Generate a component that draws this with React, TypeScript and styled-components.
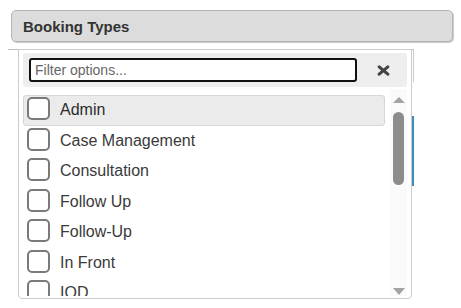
import React from 'react'
import styled, { createGlobalStyle } from 'styled-components'

const GlobalStyle = createGlobalStyle`
  html, body {
    margin: 0;
    padding: 0;
    background: #fff;
  }
  body {
    font-family: "Liberation Sans", Arial, sans-serif;
    color: #333;
  }
  * {
    box-sizing: border-box;
  }
`

const Page = styled.div`
  width: 461px;
  height: 308px;
  padding: 10px 8px 0 8px;
  overflow: hidden;
`

const SectionHeader = styled.div`
  margin-left: 3px;
  height: 32px;
  display: flex;
  align-items: center;
  padding: 1px 11px 0;
  background: #dcdcdc;
  border: 1px solid #b5b5b5;
  border-radius: 5px;
  box-shadow: 1px 1px 1px rgba(0, 0, 0, 0.22);
  font-size: 15px;
  font-weight: bold;
  color: #333;
`

const Content = styled.div`
  position: relative;
  margin-top: 7px;
  height: 260px;
`

const FormBehind = styled.div`
  width: 406px;
  display: flex;
  flex-direction: column;
  gap: 34px;
`

const FieldEdge = styled.div<{ $blue?: boolean; $h: number }>`
  height: ${({ $h }) => $h}px;
  border-top: ${({ $blue }) => ($blue ? 'none' : '1px solid #bbb')};
  border-right: ${({ $blue }) => ($blue ? '2px solid #3c8dbc' : '1px solid #ccc')};
`

const Dropdown = styled.div`
  position: absolute;
  left: 10px;
  top: 0;
  width: 394px;
  height: 250px;
  background: #fff;
  border: 1px solid #ccc;
  border-radius: 0 0 4px 4px;
  padding: 3px 4px 2px;
  display: flex;
  flex-direction: column;
  gap: 2px;
`

const FilterBar = styled.div`
  height: 34px;
  display: flex;
  align-items: center;
  padding: 0 0 0 6px;
  background: #eee;
  border-radius: 3px;
`

const FilterInput = styled.input`
  width: 328px;
  height: 24px;
  border: 2px solid #111;
  border-radius: 3px;
  padding: 0 4px;
  font-family: "Liberation Sans", Arial, sans-serif;
  font-size: 14px;
  color: #333;
  outline: none;

  &::placeholder {
    color: #666;
  }
`

const CloseButton = styled.button`
  flex: 1;
  display: flex;
  align-items: center;
  justify-content: center;
  padding: 0 0 0 3px;
  height: 100%;
  background: none;
  border: none;
  cursor: pointer;
`

const ListArea = styled.div`
  flex: 1;
  display: flex;
  gap: 5px;
  min-height: 0;
`

const Options = styled.div`
  width: 362px;
  padding-top: 6px;
  overflow: hidden;
`

const OptionRow = styled.div<{ $active?: boolean }>`
  height: 30.5px;
  display: flex;
  align-items: center;
  gap: 10px;
  padding: 0 3px;
  border: 1px solid ${({ $active }) => ($active ? '#d6d6d6' : 'transparent')};
  border-radius: 3px;
  background: ${({ $active }) => ($active ? '#ebebeb' : 'transparent')};
  font-size: 16px;
  color: ${({ $active }) => ($active ? '#2b2b2b' : '#3a3a3a')};
`

const Check = styled.span`
  width: 23px;
  height: 23px;
  flex: none;
  margin-bottom: 3px;
  border: 2px solid #7a7a7a;
  border-radius: 5px;
  background: #fff;
`

const Scrollbar = styled.div`
  width: 17px;
  display: flex;
  flex-direction: column;
  align-items: center;
  padding: 8px 0 1px;
  background: #fafafa;
`

const Arrow = styled.span<{ $down?: boolean }>`
  width: 0;
  height: 0;
  border-left: 6px solid transparent;
  border-right: 6px solid transparent;
  ${({ $down }) => ($down ? 'border-top: 7px solid #a3a3a3;' : 'border-bottom: 6px solid #a3a3a3;')}
  margin-top: ${({ $down }) => ($down ? 'auto' : '0')};
`

const Thumb = styled.span`
  width: 11px;
  height: 73px;
  margin-top: 9px;
  border-radius: 6px;
  background: #8c8c8c;
`

const options = [
  'Admin',
  'Case Management',
  'Consultation',
  'Follow Up',
  'Follow-Up',
  'In Front',
  'IOD',
  'New Client',
  'Review',
]

function CloseIcon() {
  return (
    <svg width="13" height="11" viewBox="0 0 13 11">
      <path d="M2.2 1.8 L10.8 9.2 M10.8 1.8 L2.2 9.2" stroke="#444" strokeWidth="3.1" strokeLinecap="round" />
    </svg>
  )
}

export default function App() {
  return (
    <Page>
      <GlobalStyle />
      <SectionHeader>Booking Types</SectionHeader>
      <Content>
        <FormBehind>
          <FieldEdge $h={33} />
          <FieldEdge $blue $h={70} />
        </FormBehind>

        <Dropdown>
          <FilterBar>
            <FilterInput placeholder="Filter options..." />
            <CloseButton aria-label="Clear"><CloseIcon /></CloseButton>
          </FilterBar>
          <ListArea>
            <Options>
              {options.map((o, i) => (
                <OptionRow key={o} $active={i === 0}>
                  <Check />
                  {o}
                </OptionRow>
              ))}
            </Options>
            <Scrollbar>
              <Arrow />
              <Thumb />
              <Arrow $down />
            </Scrollbar>
          </ListArea>
        </Dropdown>
      </Content>
    </Page>
  )
}
